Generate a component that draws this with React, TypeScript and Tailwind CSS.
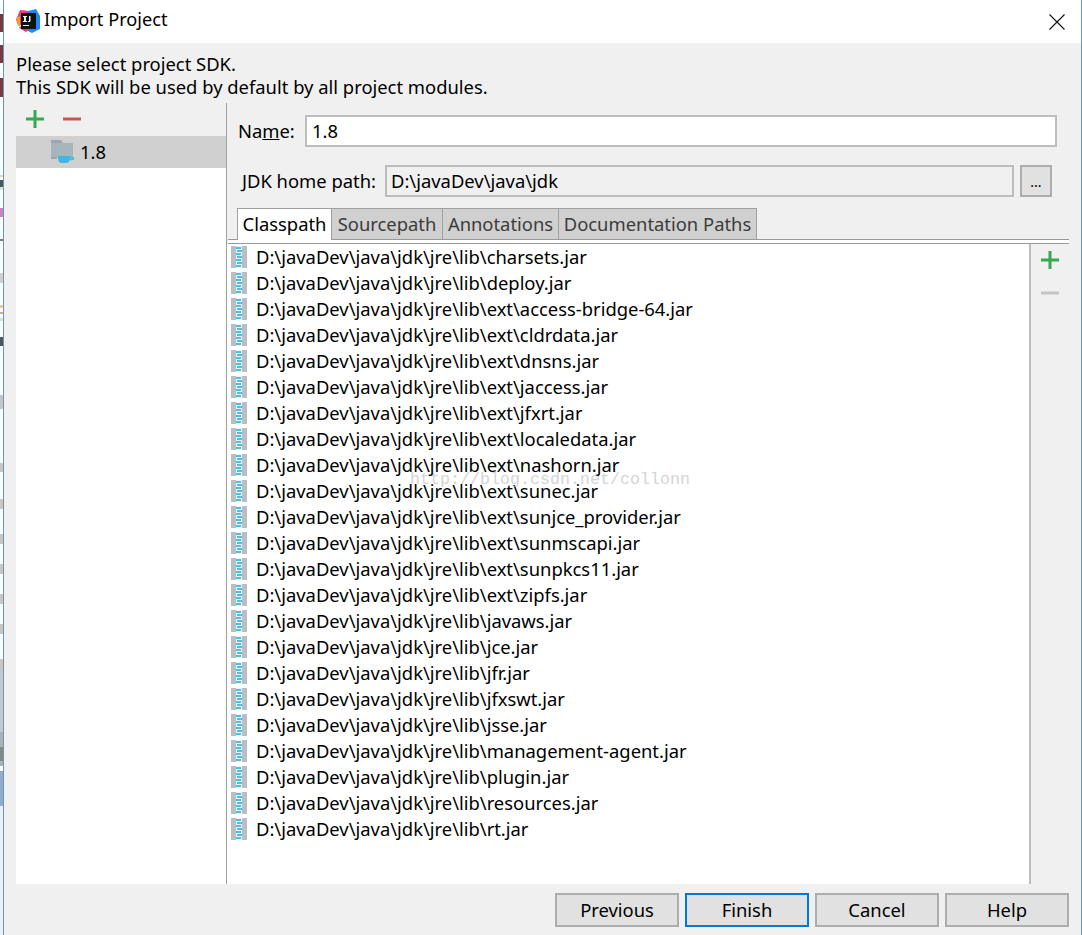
import React from "react";

const jars = [
  "charsets.jar",
  "deploy.jar",
  "ext\\access-bridge-64.jar",
  "ext\\cldrdata.jar",
  "ext\\dnsns.jar",
  "ext\\jaccess.jar",
  "ext\\jfxrt.jar",
  "ext\\localedata.jar",
  "ext\\nashorn.jar",
  "ext\\sunec.jar",
  "ext\\sunjce_provider.jar",
  "ext\\sunmscapi.jar",
  "ext\\sunpkcs11.jar",
  "ext\\zipfs.jar",
  "javaws.jar",
  "jce.jar",
  "jfr.jar",
  "jfxswt.jar",
  "jsse.jar",
  "management-agent.jar",
  "plugin.jar",
  "resources.jar",
  "rt.jar",
];

// what peeks out from the window behind, top to bottom: [height, colour]
const behind: [number, string][] = [
  [14, "#ffffff"], [18, "#7a3a3a"], [13, "#ffffff"], [18, "#7a3a3a"], [15, "#ffffff"], [19, "#7a3a3a"],
  [78, "#ffffff"], [2, "#f0d0a8"], [3, "#ffffff"], [7, "#555555"], [3, "#d8e6d0"], [18, "#ffffff"],
  [9, "#d080c0"], [22, "#ffffff"], [2, "#907068"], [32, "#ffffff"], [10, "#d8ccc4"], [22, "#ffffff"],
  [3, "#f0c890"], [4, "#ffffff"], [2, "#e0a880"], [4, "#ffffff"], [3, "#d0e4d0"], [16, "#ffffff"],
  [9, "#555555"], [49, "#ffffff"], [14, "#ccc4bc"], [54, "#ffffff"], [9, "#d0c4b8"], [27, "#ffffff"],
  [10, "#d0c4b8"], [25, "#ffffff"], [10, "#d0c4b8"], [20, "#ffffff"], [10, "#d0c4b8"], [20, "#ffffff"],
  [10, "#d0c4b8"], [20, "#ffffff"], [10, "#d0c4b8"], [25, "#ffffff"], [10, "#d0c4b8"], [63, "#c8c8c8"],
  [15, "#b0b0b0"], [14, "#8a8680"], [5, "#b0b0b0"], [5, "#ffffff"], [35, "#98aac8"], [128, "#f0f0f0"],
];

function AppLogo() {
  return (
    <svg width="24" height="24" viewBox="0 0 24 24">
      <path d="M4 1 L13 2 L12 12 L3 17 L0 11 Z" fill="#f0367f" />
      <path d="M0 9 L4 7 L4 18 L1 15 Z" fill="#f89a3c" />
      <path d="M12 2 L20 0 L24 7 L24 20 L16 24 L10 21 Z" fill="#1c8cf2" />
      <path d="M3 19 L10 23 L14 20 L6 16 Z" fill="#f0367f" />
      <rect x="5" y="4" width="15" height="16" fill="#111" />
      <path d="M7 7h4v1H10v4H11v1H7v-1h1V8H7z M13 7h1.5v5q0 1-1 1H12v-1h1z" fill="#eee" />
      <rect x="7" y="16" width="6" height="1" fill="#eee" />
    </svg>
  );
}

function PlusIcon() {
  return (
    <svg width="18" height="18" viewBox="0 0 18 18">
      <rect x="0" y="7.5" width="18" height="3" fill="#35a853" />
      <rect x="7.5" y="0" width="3" height="18" fill="#35a853" />
    </svg>
  );
}

function MinusIcon({ color }: { color: string }) {
  return (
    <svg width="18" height="18" viewBox="0 0 18 18">
      <rect x="0" y="7.5" width="18" height="3" fill={color} />
    </svg>
  );
}

function JdkFolder() {
  return (
    <svg width="24" height="24" viewBox="0 0 24 24">
      <path d="M0 0h10l2 3h10v14H0z M0 3v16h6v-3h16V3z" fill="#9aa7b0" />
      <path d="M0 3h22v14H0z" fill="#a9b5bd" />
      <path d="M7 16h12v2q0 5-4 5h-4q-4 0-4-5z" fill="#40b6e0" />
      <path d="M19 17.5h2.5q1 0 1 1t-1 1H18.5" fill="none" stroke="#40b6e0" strokeWidth="1.4" />
    </svg>
  );
}

function JarIcon() {
  return (
    <svg width="16" height="22" viewBox="0 0 16 22">
      <rect x="0" y="0" width="16" height="22" fill="#b7bfc4" />
      <rect x="5" y="0" width="6" height="22" fill="#e8f4f8" />
      {Array.from({ length: 7 }).map((_, i) => (
        <rect key={i} x={i % 2 ? 6 : 5} y={i * 3 + 1} width="5" height="2" fill="#52bde2" />
      ))}
    </svg>
  );
}

function Tab({ label, width, active }: { label: string; width: string; active?: boolean }) {
  return (
    <div
      className={
        width +
        (active
          ? " h-[32px] pb-[2px] flex items-center justify-center bg-white border-l border-t border-r border-[#a0a0a0] -mb-px text-black"
          : " h-[31px] flex items-center justify-center bg-[#d0d0d0] border-t border-r border-[#a0a0a0] text-[#3c3c3c]")
      }
    >
      {label}
    </div>
  );
}

function FooterButton({ label, focused }: { label: string; focused?: boolean }) {
  return (
    <button
      className={
        "w-[124px] h-[34px] flex items-center justify-center bg-[#e1e1e1] border-2 " +
        (focused ? "border-[#0078d7]" : "border-[#adadad]")
      }
    >
      {label}
    </button>
  );
}

export default function App() {
  return (
    <div
      className="relative w-[1082px] h-[935px] flex overflow-hidden text-[18.4px] text-black bg-[#f0f0f0]"
      style={{ fontFamily: '"Noto Sans", "Open Sans", sans-serif' }}
    >
      <div className="w-[3px] shrink-0 flex flex-col">
        {behind.map(([h, c], i) => (
          <div key={i} style={{ height: h, background: c }} />
        ))}
      </div>
      <div className="flex-1 flex flex-col border-l border-r border-[#5b9bc8] min-w-0">
        <div className="h-[43px] shrink-0 bg-white flex items-center justify-between pl-[12px] pr-[16px]">
          <div className="flex items-center gap-[4px] text-[18.2px]">
            <AppLogo />
            <span className="pb-[3px]">Import Project</span>
          </div>
          <svg width="16" height="16" viewBox="0 0 16 16">
            <path d="M0.5 0.5 L15.5 15.5 M15.5 0.5 L0.5 15.5" stroke="#111" strokeWidth="1.1" fill="none" />
          </svg>
        </div>

        <div className="flex-1 flex flex-col pl-[12px] min-h-0">
          <div className="h-[60px] shrink-0 pt-[9px] leading-[23px]">
            <div>Please select project SDK.</div>
            <div>This SDK will be used by default by all project modules.</div>
          </div>

          <div className="h-[781px] shrink-0 flex">
            <div className="w-[210px] shrink-0 flex flex-col">
              <div className="h-[33px] shrink-0 flex items-center gap-[19px] pl-[10px] pb-[2px]">
                <PlusIcon />
                <MinusIcon color="#c75450" />
              </div>
              <div className="flex-1 bg-white">
                <div className="h-[32px] bg-[#d0d0d0] flex items-center pl-[35px] gap-[5px]">
                  <JdkFolder />
                  <span>1.8</span>
                </div>
              </div>
            </div>

            <div className="flex-1 border-l border-[#a0a0a0] flex flex-col min-w-0">
              <div className="h-[12px] shrink-0" />
              <div className="h-[32px] shrink-0 flex items-center pl-[11px] pr-[24px]">
                <span className="w-[67px]">
                  Na<span className="underline">m</span>e:
                </span>
                <div className="flex-1 h-[32px] bg-white border-2 border-[#bdbdbd] flex items-center pl-[5px]">1.8</div>
              </div>
              <div className="h-[18px] shrink-0" />
              <div className="h-[32px] shrink-0 flex items-center pl-[15px] pr-[16px]">
                <span className="w-[143px]">JDK home path:</span>
                <div className="w-[629px] h-[32px] border-2 border-[#bdbdbd] flex items-center pl-[4px]">
                  D:\javaDev\java\jdk
                </div>
                <div className="ml-[6px] w-[32px] h-[32px] bg-[#e1e1e1] border-2 border-[#adadad] flex items-center justify-center text-[14px]">
                  ...
                </div>
              </div>
              <div className="h-[11px] shrink-0" />
              <div className="w-[841px] shrink-0 ml-[1px] flex flex-col">
                <div className="h-[31px] flex items-end pl-[9px] border-b border-[#999999] box-content">
                  <Tab label="Classpath" width="w-[95px]" active />
                  <Tab label="Sourcepath" width="w-[111px]" />
                  <Tab label="Annotations" width="w-[116px]" />
                  <Tab label="Documentation Paths" width="w-[198px]" />
                </div>
                <div className="h-[3px] bg-white" />
                <div className="h-[1px] bg-[#999999]" />
              </div>

              <div className="flex-1 flex min-h-0">
                <div className="w-[802px] shrink-0 bg-white">
                  {jars.map((jar) => (
                    <div key={jar} className="h-[26px] flex items-center pl-[4px] gap-[9px] whitespace-nowrap">
                      <JarIcon />
                      <span>{"D:\\javaDev\\java\\jdk\\jre\\lib\\" + jar}</span>
                    </div>
                  ))}
                </div>
                <div className="w-[2px] shrink-0 bg-[#bdbdbd]" />
                <div className="flex-1 flex flex-col items-start pl-[10px] pt-[7px] gap-[15px]">
                  <PlusIcon />
                  <MinusIcon color="#c4c4c4" />
                </div>
              </div>
            </div>
          </div>

          <div className="flex-1 flex items-start justify-end gap-[6px] pt-[9px] pr-[12px]">
            <FooterButton label="Previous" />
            <FooterButton label="Finish" focused />
            <FooterButton label="Cancel" />
            <FooterButton label="Help" />
          </div>
        </div>
      </div>

      <div
        className="absolute left-[410px] top-[467px] text-[16.67px] text-[#c4c4c4] opacity-70 whitespace-nowrap pointer-events-none"
        style={{ fontFamily: '"Liberation Mono", monospace' }}
      >
        http://blog.csdn.net/collonn
      </div>
    </div>
  );
}
